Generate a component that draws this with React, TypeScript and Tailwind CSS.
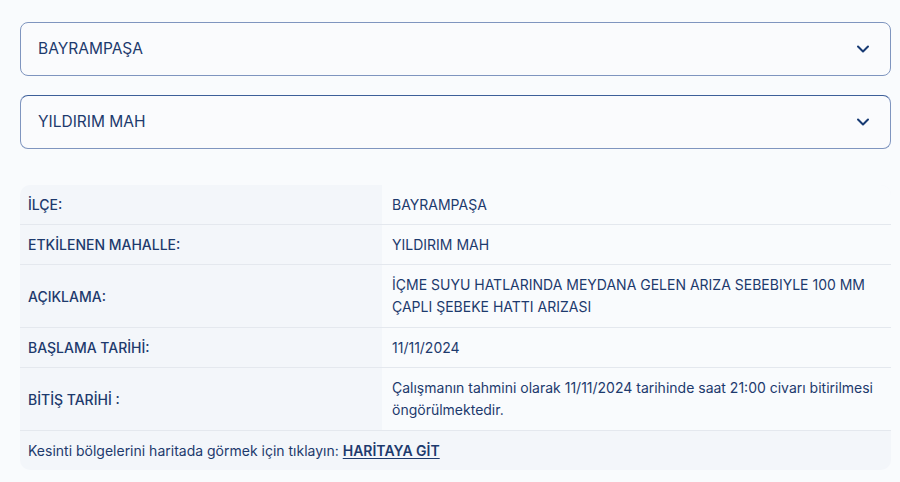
import { ChevronDown } from "lucide-react";

interface Row {
  label: string;
  value: string;
  tall?: boolean;
}

const rows: Row[] = [
  { label: "İLÇE:", value: "BAYRAMPAŞA" },
  { label: "ETKİLENEN MAHALLE:", value: "YILDIRIM MAH" },
  {
    label: "AÇIKLAMA:",
    value: "İÇME SUYU HATLARINDA MEYDANA GELEN ARIZA SEBEBIYLE 100 MM ÇAPLI ŞEBEKE HATTI ARIZASI",
    tall: true,
  },
  { label: "BAŞLAMA TARİHİ:", value: "11/11/2024" },
  {
    label: "BİTİŞ TARİHİ :",
    value: "Çalışmanın tahmini olarak 11/11/2024 tarihinde saat 21:00 civarı bitirilmesi öngörülmektedir.",
    tall: true,
  },
];

function SelectBox({ value, dark }: { value: string; dark?: boolean }) {
  return (
    <div
      className={
        "flex h-[54px] items-center justify-between rounded-lg border bg-[#fafbfd] pl-[17px] pr-[17px] " +
        (dark ? "border-[#7f95bf] border-t-[#3d5f99]" : "border-[#7f95bf]")
      }
    >
      <span className="text-[15.5px] text-[#1d3a6d]">{value}</span>
      <ChevronDown className="h-5 w-5 text-[#173a73]" strokeWidth={2.4} />
    </div>
  );
}

export default function App() {
  return (
    <div
      className="min-h-[482px] bg-[#f9fbfd] pl-5 pr-[9px] pt-[22px] text-[#1d3a6d]"
      style={{ fontFamily: "Inter, 'Noto Sans', sans-serif" }}
    >
      <div className="flex flex-col gap-[19px]">
        <SelectBox value="BAYRAMPAŞA" />
        <SelectBox value="YILDIRIM MAH" dark />
      </div>

      <div className="mt-9 overflow-hidden rounded-[10px] bg-[#f3f6fa]">
        {rows.map((row) => (
          <div
            key={row.label}
            className={
              "grid grid-cols-[362px_1fr] border-b border-[#e4e8ee] " +
              (row.tall ? "min-h-[63px]" : "min-h-[40px]")
            }
          >
            <div className="flex items-center pl-2 text-[14px] font-medium">{row.label}</div>
            <div className="flex items-center bg-[#f9fbfd] pl-[10px] pr-3 text-[14px] leading-[22px]">
              {row.value}
            </div>
          </div>
        ))}
        <div className="flex h-[39px] items-center pl-2 text-[14px]">
          Kesinti bölgelerini haritada görmek için tıklayın:&nbsp;
          <a className="font-semibold underline underline-offset-2">HARİTAYA GİT</a>
        </div>
      </div>
    </div>
  );
}
